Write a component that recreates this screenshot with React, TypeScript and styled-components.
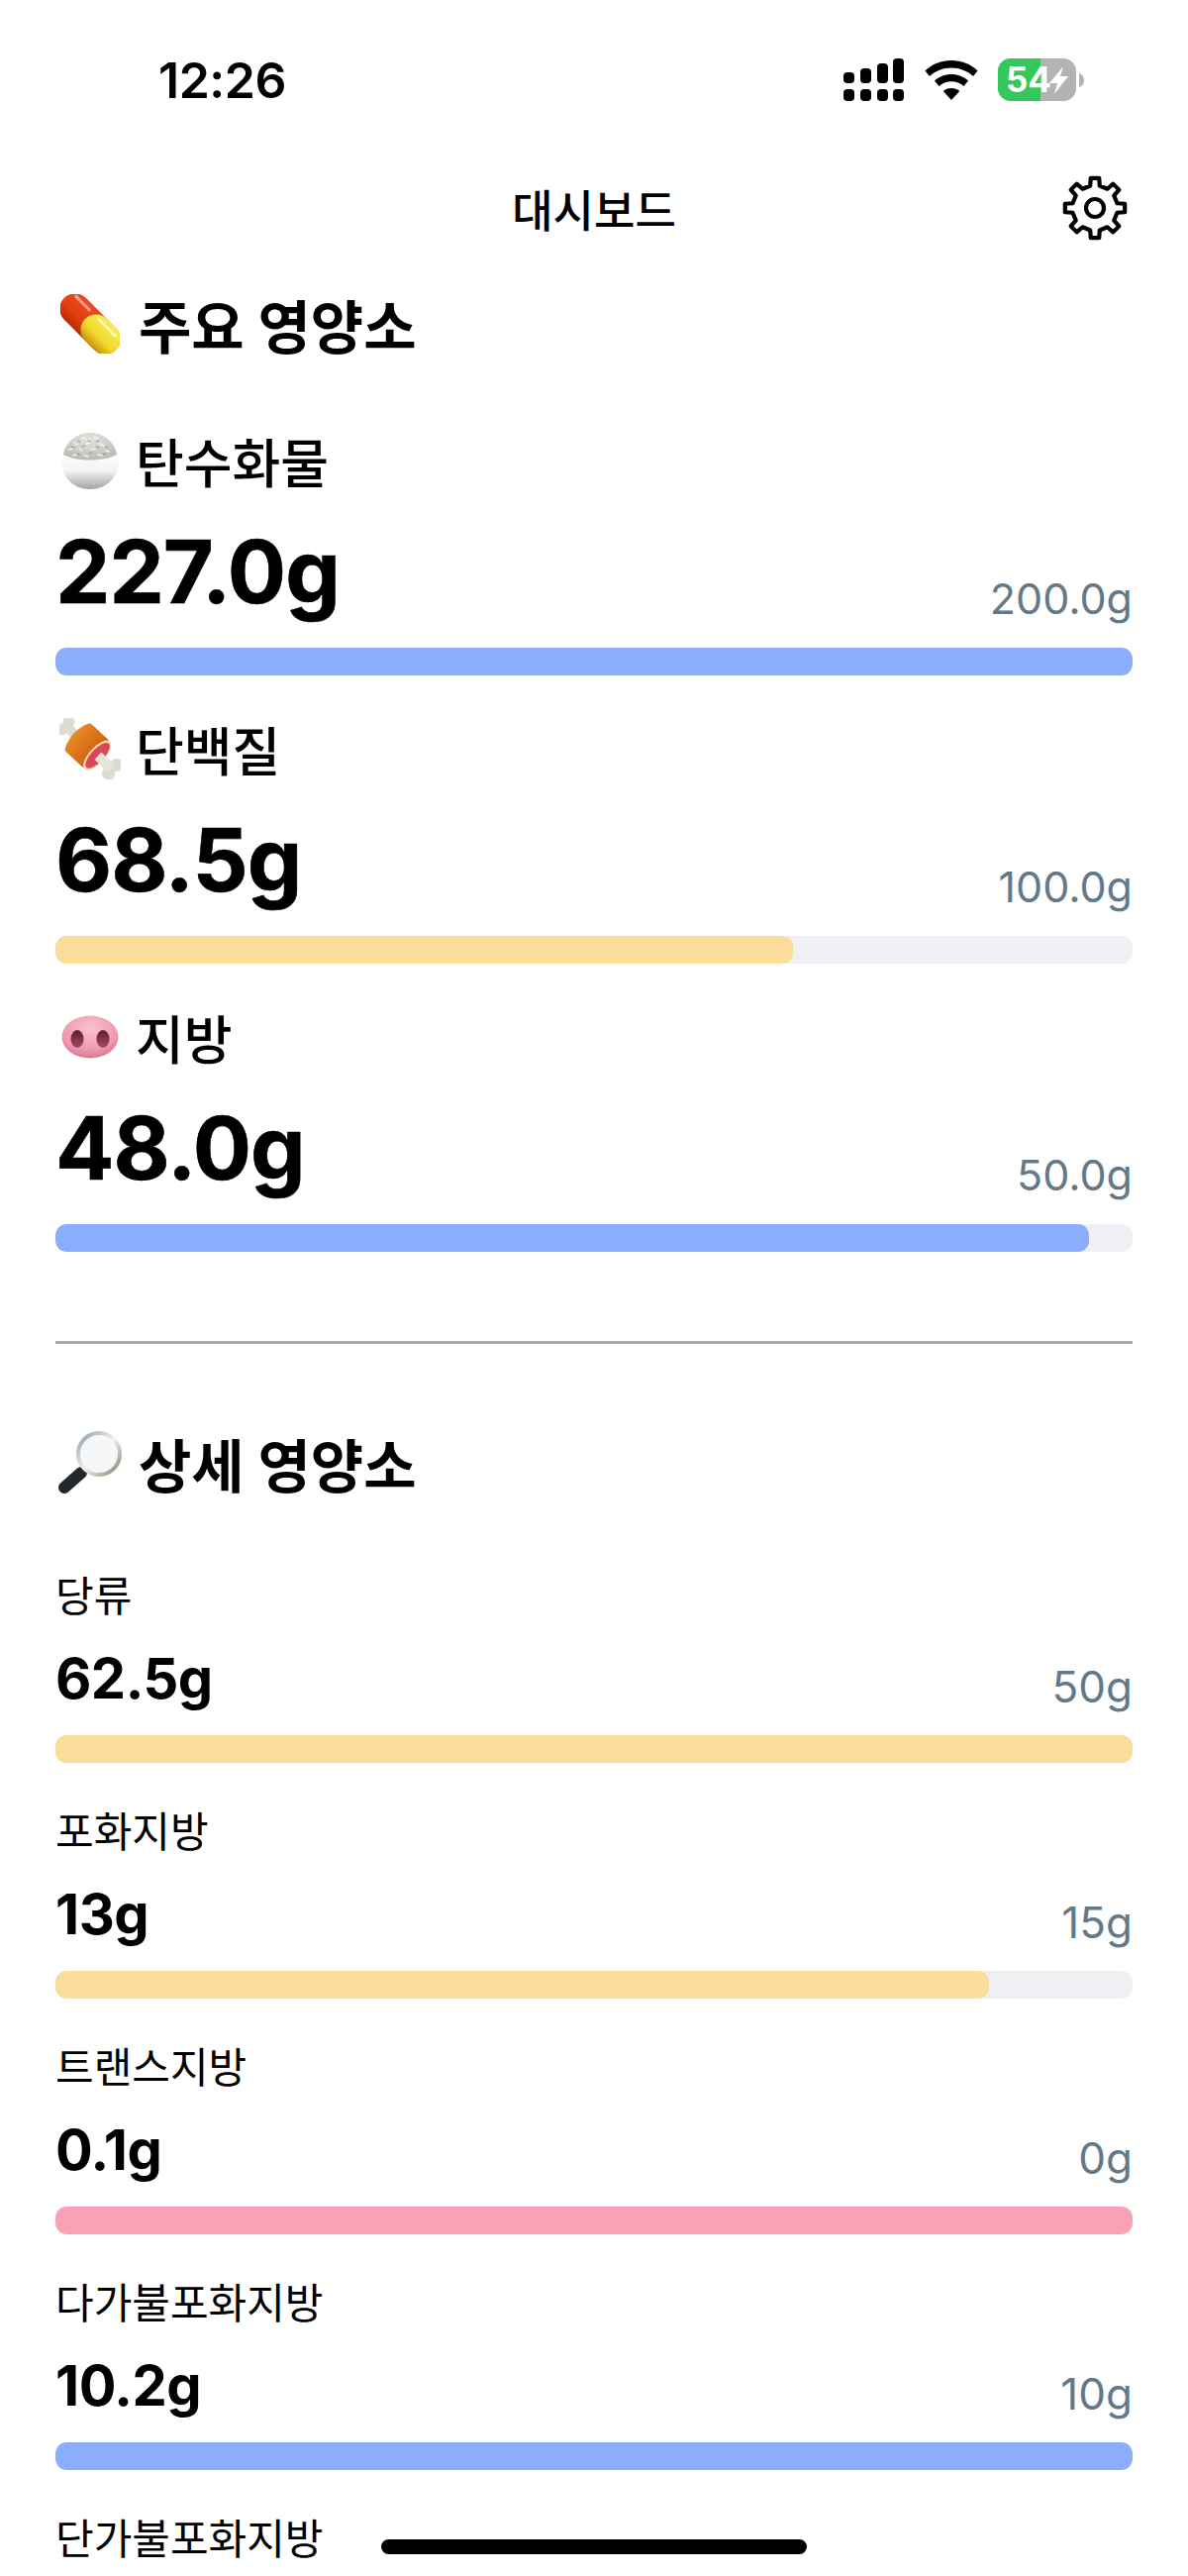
import { FC } from 'react';
import styled, { createGlobalStyle } from 'styled-components';

const BLUE = '#8aaefb';
const YELLOW = '#fcdc9a';
const PINK = '#f9a2b6';

interface INutrient {
  name: string;
  value: string;
  target: string;
  percent: number;
  color: string;
  icon?: 'rice' | 'meat' | 'nose';
}

const MAIN: INutrient[] = [
  { name: '탄수화물', value: '227.0g', target: '200.0g', percent: 100, color: BLUE, icon: 'rice' },
  { name: '단백질', value: '68.5g', target: '100.0g', percent: 68.5, color: YELLOW, icon: 'meat' },
  { name: '지방', value: '48.0g', target: '50.0g', percent: 96, color: BLUE, icon: 'nose' }
];

const DETAIL: INutrient[] = [
  { name: '당류', value: '62.5g', target: '50g', percent: 100, color: YELLOW },
  { name: '포화지방', value: '13g', target: '15g', percent: 86.7, color: YELLOW },
  { name: '트랜스지방', value: '0.1g', target: '0g', percent: 100, color: PINK },
  { name: '다가불포화지방', value: '10.2g', target: '10g', percent: 100, color: BLUE }
];

const GlobalStyle = createGlobalStyle`
  html, body {
    margin: 0;
    padding: 0;
    background: #fff;
  }
  body {
    font-family: Inter, "Noto Sans CJK KR", sans-serif;
    color: #000;
  }
`;

const Page = styled.div`
  position: relative;
  width: 1200px;
  height: 2601px;
  overflow: hidden;
  background: #fff;
`;

const StatusBar = styled.div`
  display: flex;
  align-items: center;
  justify-content: space-between;
  height: 162px;
  padding: 0 104px 0 160px;
`;

const Time = styled.div`
  font-size: 50px;
  font-weight: 600;
  letter-spacing: -0.5px;
`;

const StatusIcons = styled.div`
  display: flex;
  align-items: center;
  gap: 20px;
`;

const NavBar = styled.div`
  display: grid;
  grid-template-columns: 1fr auto 1fr;
  align-items: center;
  height: 96px;
  padding: 0 60px;
  margin-bottom: 36px;
`;

const NavTitle = styled.div`
  grid-column: 2;
  font-size: 45px;
  font-weight: 500;
`;

const GearButton = styled.div`
  grid-column: 3;
  justify-self: end;
  display: flex;
`;

const Section = styled.section`
  padding: 0 56px;
`;

const IconSlot = styled.span<{ $gap: number }>`
  display: flex;
  flex: none;
  align-items: center;
  justify-content: center;
  width: 70px;
  margin-right: ${(p) => p.$gap}px;
`;

const SectionTitle = styled.h2`
  display: flex;
  align-items: center;
  height: 66px;
  padding-bottom: 6px;
  margin: 0;
  font-size: 58px;
  font-weight: 700;
`;

const MainRow = styled.div`
  margin-top: 47px;
  &:first-of-type {
    margin-top: 72px;
  }
`;

const MainLabel = styled.div`
  display: flex;
  align-items: center;
  height: 54px;
  padding-bottom: 6px;
  font-size: 53px;
  font-weight: 500;
`;

const ValueRow = styled.div<{ $height: number }>`
  display: flex;
  align-items: flex-start;
  justify-content: space-between;
  height: ${(p) => p.$height}px;
`;

const MainValue = styled.div`
  margin-top: 14px;
  font-size: 88px;
  font-weight: 700;
  line-height: 130px;
  letter-spacing: -1px;
  -webkit-text-stroke: 0.6px #000;
`;

const Target = styled.div<{ $size: number; $top: number }>`
  margin-top: ${(p) => p.$top}px;
  font-size: ${(p) => p.$size}px;
  font-weight: 400;
  line-height: 1.21;
  color: #62798a;
`;

const Track = styled.div`
  height: 28px;
  border-radius: 11px;
  background: #eef0f4;
  overflow: hidden;
`;

const Fill = styled.div<{ $color: string }>`
  height: 100%;
  border-radius: 11px;
  background: ${(p) => p.$color};
`;

const Divider = styled.hr`
  height: 3px;
  margin: 90px 56px 0;
  border: 0;
  background: #aaa;
`;

const DetailSection = styled(Section)`
  margin-top: 87px;
`;

const DetailRow = styled.div`
  margin-top: 45px;
  &:first-of-type {
    margin-top: 71px;
  }
`;

const DetailLabel = styled.div`
  height: 50px;
  line-height: 50px;
  font-size: 42px;
  font-weight: 400;
`;

const DetailValue = styled.div`
  margin-top: 8px;
  font-size: 56px;
  font-weight: 700;
  line-height: 100px;
  letter-spacing: -0.5px;
`;

const HomeIndicator = styled.div`
  position: absolute;
  left: 385px;
  bottom: 22px;
  width: 430px;
  height: 15px;
  border-radius: 8px;
  background: #000;
`;

const SignalIcon = () => (
  <svg width="62" height="44" viewBox="0 0 62 44">
    <rect x="0" y="14" width="11" height="11" rx="4" />
    <rect x="17" y="10" width="11" height="15" rx="4" />
    <rect x="34" y="5" width="11" height="20" rx="4" />
    <rect x="50" y="0" width="11" height="25" rx="4" />
    <rect x="0" y="31" width="11" height="12" rx="4" />
    <rect x="17" y="31" width="11" height="12" rx="4" />
    <rect x="34" y="31" width="11" height="12" rx="4" />
    <rect x="50" y="31" width="11" height="12" rx="4" />
  </svg>
);

const WifiIcon = () => (
  <svg width="54" height="40" viewBox="0 0 54 40">
    <path d="M27 0c10 0 19.500 3.500 26.500 10.500l-4.500 5.500C43 10.500 35.500 7.500 27 7.500S11 10.500 5 16L.5 10.500C7.500 3.500 17 0 27 0z" />
    <path d="M27 14c6.500 0 12.500 2.500 17 6.500l-4.500 5.500c-3.300-3-7.700-4.800-12.500-4.800S17.800 23 14.500 26L10 20.500C14.500 16.500 20.500 14 27 14z" />
    <path d="M27 28c3.200 0 6 1.100 8.300 3L27 40l-8.300-9c2.300-1.900 5.100-3 8.300-3z" />
  </svg>
);

const BatteryIcon = () => (
  <svg width="88" height="44" viewBox="0 0 88 44">
    <rect x="0" y="0" width="79" height="43" rx="13" fill="#b3b3b3" />
    <path d="M13 0h30v43H13a13 13 0 0 1-13-13V13A13 13 0 0 1 13 0z" fill="#34c759" />
    <path d="M82 15c3 1 5 3.500 5 7s-2 6-5 7z" fill="#b3b3b3" />
    <text x="8" y="34" fontSize="35" fontWeight="700" fill="#fff" fontFamily="Inter, sans-serif">
      54
    </text>
    <path d="M66 8 52 25h8l-3 11 14-18h-8z" fill="#fff" />
  </svg>
);

// 8 tooth cog, points worked out around the centre of a 68px box
const gearPath = () => {
  const point = (deg: number, r: number) => {
    const a = (deg * Math.PI) / 180;
    return `${(34 + r * Math.sin(a)).toFixed(2)} ${(34 - r * Math.cos(a)).toFixed(2)}`;
  };
  const parts: string[] = [];
  for (let i = 0; i < 8; i++) {
    const c = i * 45;
    parts.push(`${i === 0 ? 'M' : 'L'}${point(c - 12, 23)}`);
    parts.push(`L${point(c - 8, 30.5)}`);
    parts.push(`L${point(c + 8, 30.5)}`);
    parts.push(`L${point(c + 12, 23)}`);
  }
  return parts.join(' ') + 'Z';
};

const GearIcon = () => (
  <svg width="68" height="68" viewBox="0 0 68 68" fill="none" stroke="#000" strokeWidth="4.2" strokeLinejoin="round">
    <path d={gearPath()} />
    <circle cx="34" cy="34" r="9" />
  </svg>
);

const PillIcon = () => (
  <svg width="60" height="60" viewBox="0 0 60 60">
    <defs>
      <linearGradient id="pillRed" x1="0" y1="0" x2="0" y2="1">
        <stop offset="0" stopColor="#e8492a" />
        <stop offset="0.6" stopColor="#e5400f" />
        <stop offset="1" stopColor="#b82a05" />
      </linearGradient>
      <linearGradient id="pillYellow" x1="0" y1="0" x2="0" y2="1">
        <stop offset="0" stopColor="#f6ec5a" />
        <stop offset="0.6" stopColor="#f2d92a" />
        <stop offset="1" stopColor="#c9920c" />
      </linearGradient>
    </defs>
    <g transform="translate(30 30) rotate(45)">
      <rect x="-37" y="-15.500" width="74" height="31" rx="15.500" fill="url(#pillRed)" />
      <rect x="-7" y="-15.500" width="44" height="31" rx="15.500" fill="url(#pillYellow)" />
      <rect x="-31" y="-11" width="22" height="3" rx="1.500" fill="#ff9d85" />
      <rect x="2" y="-11" width="26" height="3" rx="1.500" fill="#fdf8b0" />
    </g>
  </svg>
);

const RiceIcon = () => (
  <svg width="60" height="57" viewBox="0 0 60 57">
    <defs>
      <linearGradient id="bowl" x1="0" y1="0" x2="0" y2="1">
        <stop offset="0" stopColor="#ffffff" />
        <stop offset="0.5" stopColor="#f3f3f3" />
        <stop offset="1" stopColor="#a2a2a2" />
      </linearGradient>
      <radialGradient id="mound" cx="0.5" cy="0.25" r="0.8">
        <stop offset="0" stopColor="#e6e4df" />
        <stop offset="1" stopColor="#b7b5b0" />
      </radialGradient>
    </defs>
    <path d="M3 22C5 9 17 0 30 0s25 9 27 22l-2 6H5z" fill="url(#mound)" />
    <g stroke="#f5f4f0" strokeWidth="1.500" strokeLinecap="round">
      <path d="M22 5l4 1M34 4l4 2M14 10l3 2M26 11l4-1M40 11l4 2M8 17l4-1M19 16l3 2M31 17l4-1M46 18l3 1M38 22l4 1M13 23l3-1M24 23l4 1" />
    </g>
    <g stroke="#93918c" strokeWidth="1" strokeLinecap="round">
      <path d="M28 8l3 1M18 8l2 1M36 9l3-1M11 14l3 1M22 14l3-1M36 14l3 1M46 14l2 1M17 21l3 1M29 21l3-1M43 22l3-1" />
    </g>
    <path d="M0 20c6 5 18 7.500 30 7.500S54 25 60 20c1 20-9 37-30 37S-1 40 0 20z" fill="url(#bowl)" />
  </svg>
);

const MeatIcon = () => (
  <svg width="62" height="62" viewBox="0 0 62 62">
    <defs>
      <linearGradient id="meat" x1="0" y1="0" x2="1" y2="0">
        <stop offset="0" stopColor="#ea8a22" />
        <stop offset="1" stopColor="#c85c12" />
      </linearGradient>
    </defs>
    <g transform="translate(28 28) rotate(43)">
      <g fill="#dedbd0">
        <rect x="-30" y="-5" width="64" height="10" />
        <circle cx="-30" cy="-5" r="6" />
        <circle cx="-30" cy="5" r="6" />
        <circle cx="35" cy="-6" r="6.500" />
        <circle cx="35" cy="6" r="6.500" />
      </g>
      <path d="M-13 -19 L12 -19 C18 -12 18 12 12 19 L-13 19 C-20 10 -20 -10 -13 -19z" fill="url(#meat)" />
      <ellipse cx="14" cy="0" rx="8" ry="19" fill="#fbd6a8" />
      <ellipse cx="14.500" cy="0" rx="6.500" ry="16.500" fill="#d8485a" />
      <rect x="15" y="-5" width="19" height="10" fill="#e6e3d9" />
    </g>
  </svg>
);

const NoseIcon = () => (
  <svg width="58" height="44" viewBox="0 0 58 44">
    <defs>
      <radialGradient id="snout" cx="0.5" cy="0.3" r="0.8">
        <stop offset="0" stopColor="#f9c3cf" />
        <stop offset="0.65" stopColor="#ee96ae" />
        <stop offset="1" stopColor="#c76883" />
      </radialGradient>
      <linearGradient id="nostril" x1="0" y1="0" x2="0" y2="1">
        <stop offset="0" stopColor="#5e1c2e" />
        <stop offset="1" stopColor="#a54c65" />
      </linearGradient>
    </defs>
    <ellipse cx="29" cy="22" rx="28.500" ry="21.500" fill="url(#snout)" />
    <ellipse cx="16" cy="24" rx="6.500" ry="9" fill="url(#nostril)" />
    <ellipse cx="42" cy="24" rx="6.500" ry="9" fill="url(#nostril)" />
  </svg>
);

const LensIcon = () => (
  <svg width="66" height="64" viewBox="0 0 66 64">
    <defs>
      <linearGradient id="rim" x1="0" y1="0" x2="1" y2="1">
        <stop offset="0" stopColor="#8d9aa5" />
        <stop offset="0.5" stopColor="#f2f2f2" />
        <stop offset="1" stopColor="#8a7f66" />
      </linearGradient>
    </defs>
    <path d="M30 36 22 44" stroke="#8e8e8e" strokeWidth="5" />
    <path d="M24 42 7 57" stroke="#23282c" strokeWidth="12" strokeLinecap="round" />
    <circle cx="42" cy="23" r="21" fill="#f4f6f8" stroke="url(#rim)" strokeWidth="4" />
  </svg>
);

const ICONS = { rice: RiceIcon, meat: MeatIcon, nose: NoseIcon };

const App: FC = () => {
  return (
    <Page>
      <GlobalStyle />
      <StatusBar>
        <Time>12:26</Time>
        <StatusIcons>
          <SignalIcon />
          <WifiIcon />
          <BatteryIcon />
        </StatusIcons>
      </StatusBar>
      <NavBar>
        <NavTitle>대시보드</NavTitle>
        <GearButton>
          <GearIcon />
        </GearButton>
      </NavBar>

      <Section>
        <SectionTitle>
          <IconSlot $gap={14}>
            <PillIcon />
          </IconSlot>
          주요 영양소
        </SectionTitle>
        {MAIN.map((item) => {
          const Icon = ICONS[item.icon as keyof typeof ICONS];
          return (
            <MainRow key={item.name}>
              <MainLabel>
                <IconSlot $gap={11}>
                  <Icon />
                </IconSlot>
                {item.name}
              </MainLabel>
              <ValueRow $height={156}>
                <MainValue>{item.value}</MainValue>
                <Target $size={43} $top={80}>
                  {item.target}
                </Target>
              </ValueRow>
              <Track>
                <Fill $color={item.color} style={{ width: `${item.percent}%` }} />
              </Track>
            </MainRow>
          );
        })}
      </Section>

      <Divider />

      <DetailSection>
        <SectionTitle>
          <IconSlot $gap={14}>
            <LensIcon />
          </IconSlot>
          상세 영양소
        </SectionTitle>
        {DETAIL.map((item) => (
          <DetailRow key={item.name}>
            <DetailLabel>{item.name}</DetailLabel>
            <ValueRow $height={115}>
              <DetailValue>{item.value}</DetailValue>
              <Target $size={44} $top={40}>
                {item.target}
              </Target>
            </ValueRow>
            <Track>
              <Fill $color={item.color} style={{ width: `${item.percent}%` }} />
            </Track>
          </DetailRow>
        ))}
        <DetailRow>
          <DetailLabel>단가불포화지방</DetailLabel>
        </DetailRow>
      </DetailSection>

      <HomeIndicator />
    </Page>
  );
};

export default App;
